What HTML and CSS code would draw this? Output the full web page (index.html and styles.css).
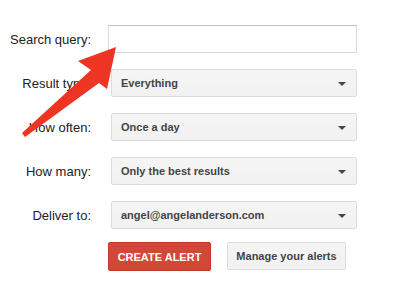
FILE: index.html
```html
<!DOCTYPE html>
<html lang="en">
<head>
  <meta charset="UTF-8">
  <meta name="viewport" content="width=device-width, initial-scale=1.0">
  <title>Create Alert</title>
  <link rel="stylesheet" href="styles.css">
</head>
<body>
<div class="alert-form">
  <div class="form-row">
    <label class="form-label" for="query">Search query:</label>
    <input class="query-input" type="text" id="query">
  </div>
  <div class="form-row">
    <span class="form-label">Result type:</span>
    <div class="select-box">Everything<span class="caret"></span></div>
  </div>
  <div class="form-row">
    <span class="form-label">How often:</span>
    <div class="select-box">Once a day<span class="caret"></span></div>
  </div>
  <div class="form-row">
    <span class="form-label">How many:</span>
    <div class="select-box">Only the best results<span class="caret"></span></div>
  </div>
  <div class="form-row">
    <span class="form-label">Deliver to:</span>
    <div class="select-box">angel@angelanderson.com<span class="caret"></span></div>
  </div>
  <div class="button-row">
    <button class="btn btn-create">CREATE ALERT</button>
    <button class="btn btn-manage">Manage your alerts</button>
  </div>
</div>
<svg class="pointer" width="400" height="300" viewBox="0 0 400 300">
  <polygon points="116,47 78,61 91,70 22,133 25,137 99,83 107,89" fill="#ee3524"/>
</svg>
</body>
</html>
```

FILE: styles.css
```css
body {
  margin: 0;
  background-color: #fff;
  font-family: "Liberation Sans", Arial, sans-serif;
  width: 400px;
  height: 300px;
  position: relative;
  overflow: hidden;
}

.alert-form {
  padding-top: 25px;
  display: flex;
  flex-direction: column;
  gap: 16px;
}

.form-row {
  display: flex;
  align-items: center;
  height: 28px;
}

.form-label {
  width: 91px;
  text-align: right;
  font-size: 13px;
  color: #222;
  margin-right: 17px;
}

.query-input {
  width: 249px;
  height: 28px;
  box-sizing: border-box;
  border: 1px solid #d9d9d9;
  border-top-color: #c0c0c0;
  margin: 0;
  padding: 0 8px;
  font-size: 13px;
}

.select-box {
  margin-left: 3px;
  width: 246px;
  height: 28px;
  box-sizing: border-box;
  border: 1px solid #dcdcdc;
  border-radius: 2px;
  background: linear-gradient(#f5f5f5, #f1f1f1);
  padding-left: 9px;
  display: flex;
  align-items: center;
  font-size: 11px;
  font-weight: bold;
  color: #444;
  position: relative;
}

.caret {
  position: absolute;
  right: 10px;
  top: 12px;
  width: 0;
  height: 0;
  border-left: 4px solid transparent;
  border-right: 4px solid transparent;
  border-top: 4px solid #444;
}

.button-row {
  display: flex;
  gap: 16px;
  padding-left: 108px;
  margin-top: -3px;
}

.btn {
  height: 29px;
  box-sizing: border-box;
  border-radius: 2px;
  font-family: "Liberation Sans", Arial, sans-serif;
  font-size: 11px;
  font-weight: bold;
  padding: 0;
  margin: 0;
  white-space: nowrap;
}

.btn-create {
  width: 103px;
  background-color: #d14836;
  border: 1px solid #c53727;
  color: #fff;
}

.btn-manage {
  width: 119px;
  height: 28px;
  background: linear-gradient(#f5f5f5, #f1f1f1);
  border: 1px solid #dcdcdc;
  color: #444;
}

.pointer {
  position: absolute;
  left: 0;
  top: 0;
}
```
